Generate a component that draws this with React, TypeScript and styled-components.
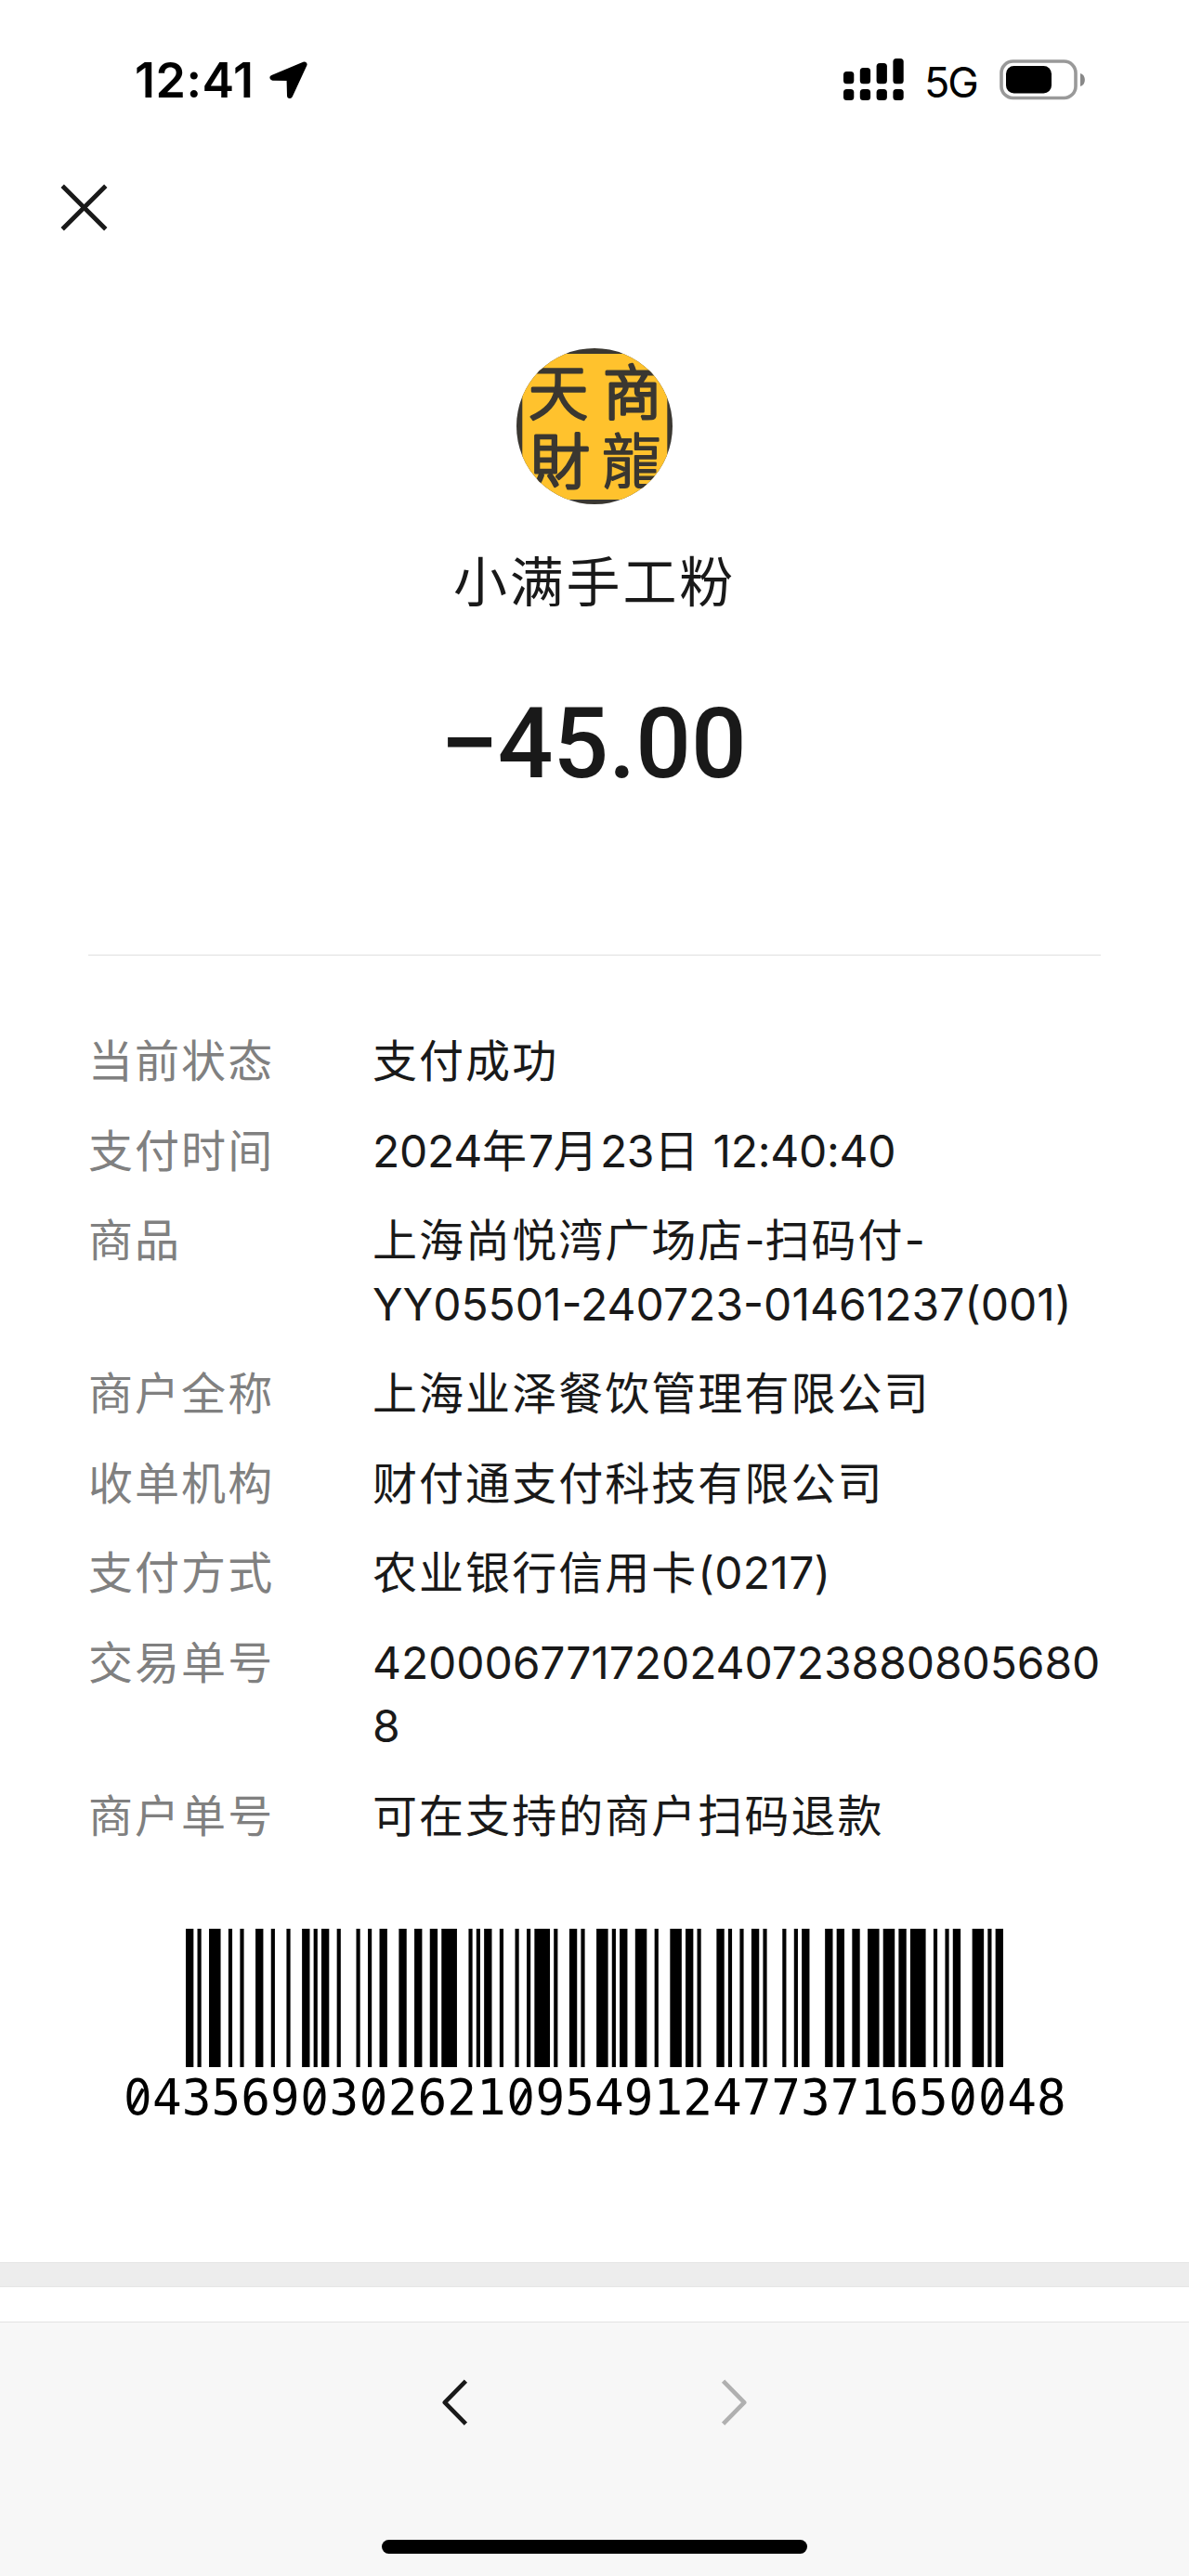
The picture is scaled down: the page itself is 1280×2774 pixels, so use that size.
import { Fragment } from "react";
import styled, { createGlobalStyle } from "styled-components";

const GlobalStyle = createGlobalStyle`
  * {
    box-sizing: border-box;
  }

  body {
    margin: 0;
    background-color: white;
    color: #191919;
    font-family: Inter, "Noto Sans CJK SC", sans-serif;
  }
`;

const Container = styled.div`
  width: 1280px;
  height: 2774px;
  display: flex;
  flex-direction: column;
  overflow: hidden;
`;

const StatusBar = styled.header`
  height: 172px;
  padding: 0 110px 0 145px;
  display: flex;
  justify-content: space-between;
  align-items: center;
  color: black;
`;

const StatusGroup = styled.div`
  display: flex;
  align-items: center;
`;

const Time = styled.span`
  width: 145px;
  padding-top: 2px;
  font-size: 52px;
  font-weight: 600;
  line-height: 60px;
  letter-spacing: 0.5px;
`;

const Network = styled.span`
  margin: 5px 21px 0 22px;
  width: 60px;
  font-size: 45px;
  line-height: 54px;
  letter-spacing: -2px;
`;

const NavBar = styled.nav`
  height: 104px;
  padding: 26px 0 0 65px;
`;

const IconButton = styled.button`
  display: block;
  padding: 0;
  border: none;
  background: none;
  line-height: 0;
`;

const Summary = styled.section`
  height: 753px;
  margin: 0 95px;
  padding-top: 99px;
  display: flex;
  flex-direction: column;
  align-items: center;
  border-bottom: 1px solid #e0e0e0;
`;

const Merchant = styled.h1`
  margin: 39px 0 0;
  font-size: 58px;
  font-weight: 400;
  line-height: 90px;
  letter-spacing: 2.8px;
`;

const Amount = styled.p`
  margin: 68px 0 0;
  display: flex;
  align-items: center;
  font-family: Roboto, sans-serif;
  font-size: 105px;
  font-weight: 500;
  line-height: 124px;
`;

const Minus = styled.span`
  margin: -2px -1px 0 -3px;
  font-size: 113px;
`;

const Details = styled.dl`
  margin: 80px 95px 0;
  display: flex;
  flex-direction: column;
  gap: 28.2px;
`;

const Detail = styled.div`
  display: flex;
  font-size: 48px;
  line-height: 68.4px;
  letter-spacing: 2.05px;
`;

const Label = styled.dt`
  width: 306px;
  flex-shrink: 0;
  color: #808080;
`;

const Value = styled.dd`
  margin: 0;
  white-space: nowrap;
`;

const Latin = styled.span<{ $spacing: number }>`
  letter-spacing: ${(props) => props.$spacing}px;
`;

const BarcodeBox = styled.section`
  margin-top: 87px;
  display: flex;
  flex-direction: column;
  align-items: center;
  color: black;
`;

const BarcodeNumber = styled.div`
  margin-top: 2px;
  font-family: "DejaVu Sans Mono", monospace;
  font-size: 52.7px;
  line-height: 62px;
`;

// plain zero with a slash laid over it
const Zero = styled.span`
  position: relative;
  padding: 0 0.0147em;
  font-family: "DejaVu Sans Condensed", "DejaVu Sans", sans-serif;
  font-stretch: condensed;

  &::after {
    content: "";
    position: absolute;
    left: calc(50% - 2px);
    top: calc(50% - 11px);
    width: 4px;
    height: 25px;
    background-color: black;
    transform: rotate(29deg);
  }
`;

const Divider = styled.div`
  height: 27px;
  margin-top: auto;
  flex-shrink: 0;
  background-color: #ededed;
  border: solid #e6e6e6;
  border-width: 1px 0;
`;

const Toolbar = styled.footer`
  height: 274px;
  margin-top: 37px;
  padding: 61px 0 24px;
  flex-shrink: 0;
  display: flex;
  flex-direction: column;
  justify-content: space-between;
  align-items: center;
  background-color: #f7f7f7;
  border-top: 1px solid #e2e2e2;
`;

const ToolbarButtons = styled.div`
  display: flex;
  gap: 272px;
`;

const HomeIndicator = styled.div`
  width: 458px;
  height: 15px;
  border-radius: 8px;
  background-color: black;
`;

interface IDetail {
  label: string;
  lines: string[];
  spacing?: number;
}

const details: IDetail[] = [
  { label: "当前状态", lines: ["支付成功"] },
  { label: "支付时间", lines: ["2024年7月23日 12:40:40"], spacing: -0.3 },
  { label: "商品", lines: ["上海尚悦湾广场店-扫码付-", "YY05501-240723-01461237(001)"] },
  { label: "商户全称", lines: ["上海业泽餐饮管理有限公司"] },
  { label: "收单机构", lines: ["财付通支付科技有限公司"] },
  { label: "支付方式", lines: ["农业银行信用卡(0217)"], spacing: 0.3 },
  { label: "交易单号", lines: ["420006771720240723880805680", "8"], spacing: -0.1 },
  { label: "商户单号", lines: ["可在支持的商户扫码退款"] },
];

const barcodeNumber = "04356903026210954912477371650048";

// Code 128-C: start, 16 digit pairs, checksum, stop
const barcodePatterns = [
  "211232",
  "121322",
  "131321",
  "112214",
  "121223",
  "222221",
  "431111",
  "221312",
  "114113",
  "211331",
  "112232",
  "133121",
  "142112",
  "122114",
  "121124",
  "212222",
  "313121",
  "421211",
  "2331112",
];

const getBars = () => {
  const bars: { x: number; width: number }[] = [];
  let x = 0;
  barcodePatterns
    .join("")
    .split("")
    .forEach((module, index) => {
      const width = Number(module);
      if (index % 2 === 0) bars.push({ x, width });
      x += width;
    });
  return bars;
};

function MixedText({ text, spacing = 0 }: { text: string; spacing?: number }) {
  return (
    <>
      {text.split(/([\x20-\x7e]+)/).map((part, index) =>
        index % 2 === 1 ? (
          <Latin key={index} $spacing={spacing}>
            {part}
          </Latin>
        ) : (
          <Fragment key={index}>{part}</Fragment>
        )
      )}
    </>
  );
}

function LocationIcon() {
  return (
    <svg width="42" height="42" viewBox="0 0 42 42">
      <path
        d="M37.5 4.5 L3.5 18.7 L21.5 19 L22 38 Z"
        fill="black"
        stroke="black"
        strokeWidth="6"
        strokeLinejoin="round"
      />
    </svg>
  );
}

function SignalIcon() {
  return (
    <svg width="65" height="46" viewBox="0 0 65 46">
      {[14, 10, 5, 0].map((top, index) => (
        <g key={top}>
          <rect x={index * 17.8} y={top} width="11.3" height={27.3 - top} rx="3.5" />
          <rect x={index * 17.8} y="33" width="11.3" height="12" rx="3.5" />
        </g>
      ))}
    </svg>
  );
}

function BatteryIcon() {
  return (
    <svg width="94" height="44" viewBox="0 0 94 44">
      <rect x="2" y="2" width="80" height="39.5" rx="12.5" fill="none" stroke="#999" strokeWidth="3.6" />
      <rect x="7" y="7" width="49" height="29.5" rx="8.5" />
      <path d="M87 15 C93.5 16.5 93.5 27.5 87 29 Z" fill="#888" />
    </svg>
  );
}

function CloseIcon() {
  return (
    <svg width="51" height="51" viewBox="0 0 51 51">
      <path d="M2.2 2.2 L48.8 48.8 M48.8 2.2 L2.2 48.8" stroke="#191919" strokeWidth="4.8" />
    </svg>
  );
}

function ArrowIcon({ direction, color }: { direction: "back" | "forward"; color: string }) {
  return (
    <svg width="28" height="51" viewBox="0 0 28 51">
      <path
        d={direction === "back" ? "M25.4 2.2 L2.8 25.2 L25.4 48.2" : "M2.6 2.2 L25.2 25.2 L2.6 48.2"}
        fill="none"
        stroke={color}
        strokeWidth="4.6"
        strokeLinejoin="round"
      />
    </svg>
  );
}

function MerchantLogo() {
  return (
    <svg width="168" height="168" viewBox="16 15.3 168 168">
      <clipPath id="logo">
        <circle cx="100" cy="99.3" r="84" />
      </clipPath>
      <g clipPath="url(#logo)">
        <rect width="200" height="200" fill="#3a3731" />
        <rect x="22.3" y="21.3" width="156" height="157" fill="#ffc22d" />
        <g
          fill="#3a3731"
          stroke="#3a3731"
          strokeWidth="3.2"
          strokeLinejoin="round"
          fontFamily="Noto Sans CJK TC, sans-serif"
          fontSize="64"
          fontWeight="300"
          textAnchor="middle"
        >
          <text x="61" y="86">天</text>
          <text x="141" y="86">商</text>
          <text x="63" y="160">財</text>
          <text x="140" y="160" strokeWidth="2.2">龍</text>
        </g>
      </g>
    </svg>
  );
}

function App() {
  return (
    <Container>
      <GlobalStyle />
      <StatusBar>
        <StatusGroup>
          <Time>12:41</Time>
          <LocationIcon />
        </StatusGroup>
        <StatusGroup>
          <SignalIcon />
          <Network>5G</Network>
          <BatteryIcon />
        </StatusGroup>
      </StatusBar>
      <NavBar>
        <IconButton>
          <CloseIcon />
        </IconButton>
      </NavBar>
      <Summary>
        <MerchantLogo />
        <Merchant>小满手工粉</Merchant>
        <Amount>
          <Minus>−</Minus>
          <span>45.00</span>
        </Amount>
      </Summary>
      <Details>
        {details.map(({ label, lines, spacing }) => (
          <Detail key={label}>
            <Label>{label}</Label>
            <Value>
              {lines.map((line) => (
                <div key={line}>
                  <MixedText text={line} spacing={spacing} />
                </div>
              ))}
            </Value>
          </Detail>
        ))}
      </Details>
      <BarcodeBox>
        <svg width="880" height="149" viewBox="0 0 211 149" preserveAspectRatio="none">
          {getBars().map((bar) => (
            <rect key={bar.x} x={bar.x} width={bar.width} height="149" />
          ))}
        </svg>
        <BarcodeNumber>
          {barcodeNumber.split("").map((digit, index) =>
            digit === "0" ? <Zero key={index}>0</Zero> : <Fragment key={index}>{digit}</Fragment>
          )}
        </BarcodeNumber>
      </BarcodeBox>
      <Divider />
      <Toolbar>
        <ToolbarButtons>
          <IconButton>
            <ArrowIcon direction="back" color="#191919" />
          </IconButton>
          <IconButton>
            <ArrowIcon direction="forward" color="#b0b0b0" />
          </IconButton>
        </ToolbarButtons>
        <HomeIndicator />
      </Toolbar>
    </Container>
  );
}

export default App;
